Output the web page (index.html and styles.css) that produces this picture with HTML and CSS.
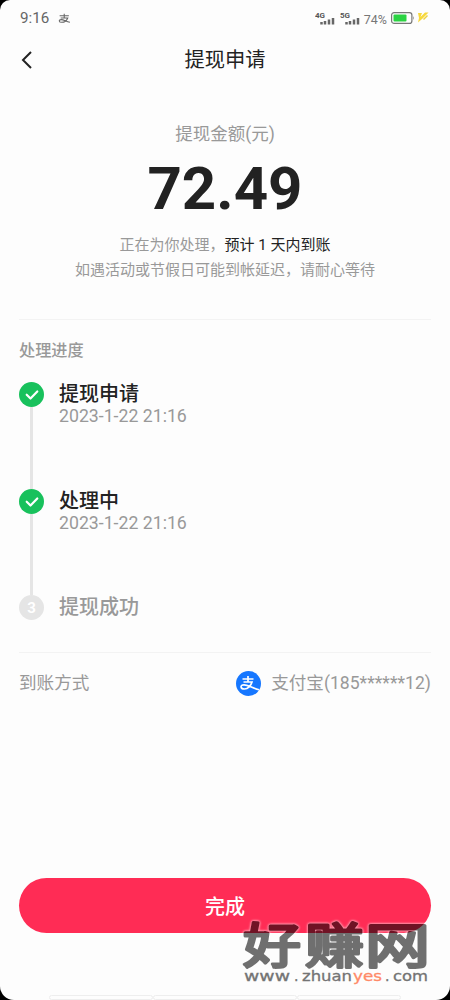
FILE: index.html
```
<!DOCTYPE html>
<html lang="zh-CN">
<head>
<meta charset="utf-8">
<title>提现申请</title>
<link rel="stylesheet" href="styles.css">
</head>
<body>
<div class="device">
<main class="screen">
  <header class="status">
    <span class="clock">9:16</span>
    <svg class="status-pay" viewBox="0 0 24 20"><path d="M3 5h17M11.500 1v8M5 9h13c-2 5-6 8-11 8-6 0-6-5-1-5 5 0 9 4 16 5"/></svg>
    <div class="indicators">
      <svg class="signal" viewBox="0 0 20 15"><text x="0" y="6.500">4G</text><path d="M6.500 11v2.500M10 10v3.500M14 8.500v5M18 7v6.500"/></svg>
      <svg class="signal second" viewBox="0 0 20 15"><text x="0" y="6.500">5G</text><path d="M6.500 11v2.500M10 10v3.500M14 8.500v5M18 7v6.500"/></svg>
      <span class="percent">74%</span>
      <svg class="battery" viewBox="0 0 24 12"><rect x=".6" y=".6" width="20.300" height="10.800" rx="2.500" fill="none" stroke="#777" stroke-width="1.200"/><path d="M22 4v4q1.500-2 0-4" fill="#777"/><rect x="2.500" y="2.500" width="13" height="7" rx="1" fill="#2bd343"/></svg>
      <svg class="bolt" viewBox="0 0 12 12"><path d="M1 2h4L3.500 6 8 1.500h3.500L5 8l-4 3.500L2 7z" fill="#f7d83c"/><path d="M10.500 4.500L6.500 8.500" fill="none" stroke="#efd23c" stroke-width="1.500"/></svg>
    </div>
  </header>
  <nav class="nav">
    <svg class="back" viewBox="0 0 12 20"><path d="M10 2L2 10l8 8"/></svg>
    <h1>提现申请</h1>
  </nav>
  <section class="summary">
    <p class="label">提现金额(元)</p>
    <p class="amount">72.49</p>
    <p class="note">正在为你处理，<span class="strong">预计 1 天内到账</span></p>
    <p class="note">如遇活动或节假日可能到帐延迟，请耐心等待</p>
  </section>
  <section class="progress">
    <h2>处理进度</h2>
    <ol class="steps">
      <li class="step">
        <div class="rail"><span class="dot done"><svg viewBox="0 0 25 25"><path d="M7.700 12.700l3.800 3.800 6.800-7"/></svg></span></div>
        <div class="info"><h3>提现申请</h3><time>2023-1-22 21:16</time></div>
      </li>
      <li class="step">
        <div class="rail"><span class="dot done"><svg viewBox="0 0 25 25"><path d="M7.700 12.700l3.800 3.800 6.800-7"/></svg></span></div>
        <div class="info"><h3>处理中</h3><time>2023-1-22 21:16</time></div>
      </li>
      <li class="step pending">
        <div class="rail"><span class="dot">3</span></div>
        <div class="info"><h3>提现成功</h3></div>
      </li>
    </ol>
  </section>
  <section class="method">
    <span class="method-text">到账方式</span>
    <span class="account">
      <svg class="alipay" viewBox="0 0 25 25"><circle cx="12.500" cy="12.500" r="12.500" fill="#1677ff"/><path d="M6.500 8h11M12 5v6M7.500 11h8.500c-1 3.500-4 7-7.500 7-4.500 0-4.500-4.200-.5-4.200 4 0 7.500 3 15 5" fill="none" stroke="#fff" stroke-width="1.700"/></svg>
      <span class="method-text">支付宝(185******12)</span>
    </span>
  </section>
  <button class="finish" type="button">完成</button>
  <div class="dock"><i></i><i></i><i></i></div>
  <svg class="watermark" viewBox="0 0 210 75">
    <g class="mark-name"><text x="11" y="48.500" textLength="58" lengthAdjust="spacingAndGlyphs">好</text><text x="73" y="48.500" textLength="59" lengthAdjust="spacingAndGlyphs">赚</text><text x="133" y="48.500" textLength="65" lengthAdjust="spacingAndGlyphs">网</text></g>
    <g class="mark-url"><text x="12" y="67" textLength="46" lengthAdjust="spacingAndGlyphs">www</text><text x="62" y="67">.</text><text x="70" y="67" textLength="50" lengthAdjust="spacingAndGlyphs">zhuan</text><text class="accent" x="121" y="67" textLength="29" lengthAdjust="spacingAndGlyphs">yes</text><text x="153" y="67">.</text><text x="161" y="67" textLength="35" lengthAdjust="spacingAndGlyphs">com</text></g>
  </svg>
</main>
</div>
</body>
</html>
```
FILE: styles.css
```
* { box-sizing: border-box; margin: 0; padding: 0; }
body { background: #000; font-family: Roboto, "Noto Sans CJK SC", sans-serif; }
.device { width: 450px; height: 1000px; overflow: hidden; background: #000; }
.screen { position: relative; display: flex; flex-direction: column; height: 1000px; padding: 0 19px; background: #fdfdfd; border-radius: 10px 10px 14px 14px; overflow: hidden; }

.status { display: flex; align-items: center; height: 36px; color: #666; }
.clock { font-size: 15.2px; margin-left: 1px; }
.status-pay { width: 13px; height: 11px; margin-left: 9px; fill: none; stroke: #666; stroke-width: 2; }
.indicators { display: flex; align-items: center; margin-left: auto; }
.signal { width: 20px; height: 15px; fill: none; stroke: #666; stroke-width: 2.5; }
.signal text { font-size: 8px; font-weight: 700; fill: #555; stroke: none; }
.second { margin-left: 5px; }
.percent { font-size: 12.5px; margin: 2px 4px 0 4px; color: #777; }
.battery { width: 24px; height: 12px; }
.bolt { width: 12px; height: 12px; margin: 0 2px 2px 2px; }

.nav { display: grid; grid-template-columns: 30px 1fr 30px; align-items: center; height: 46px; }
.back { width: 12px; height: 20px; margin: 2px 0 0 2px; fill: none; stroke: #222; stroke-width: 2; }
h1 { font-size: 20.3px; line-height: 30px; padding-top: 1px; font-weight: 400; text-align: center; color: #222; }

.summary { height: 236.5px; padding-top: 40px; text-align: center; }
.label { font-size: 17.5px; line-height: 24px; color: #999; }
.amount { font-size: 60px; font-weight: 700; line-height: 60px; height: 60px; margin: 13px 0 13.5px; color: #222; }
.note { font-size: 15px; line-height: 25px; color: #999; white-space: nowrap; }
.strong { color: #222; }

.progress { height: 333px; padding-top: 19.5px; border-top: 1px solid #f3f3f3; }
h2 { font-size: 16.2px; line-height: 24px; font-weight: 500; color: #999; }
.steps { list-style: none; margin-top: 19px; }
.step { display: flex; height: 106.5px; gap: 15px; }
.rail { display: flex; flex-direction: column; align-items: center; width: 25px; }
.step:not(.pending) .rail::after { content: ""; flex: 1; width: 3px; background: #e5e5e5; }
.dot { display: grid; place-items: center; width: 25px; height: 25px; border-radius: 50%; background: #e5e5e5; color: #fff; font-size: 15px; font-weight: 700; }
.dot svg { width: 25px; height: 25px; fill: none; stroke: #fff; stroke-width: 2.2; stroke-linecap: round; stroke-linejoin: round; }
.done { background: #18c15c; }
h3 { font-size: 20px; line-height: 24px; font-weight: 500; color: #222; }
.pending h3 { color: #999; }
time { display: block; font-size: 17.7px; line-height: 21px; color: #999; }

.method { display: flex; align-items: center; justify-content: space-between; height: 62px; border-top: 1px solid #f3f3f3; font-size: 17.6px; color: #999; }
.method-text { padding-bottom: 3px; }
.account { display: flex; align-items: center; gap: 10px; }
.alipay { width: 25px; height: 25px; }

.finish { height: 55px; margin-top: 164px; flex: none; border: 0; border-radius: 28px; background: #ff2c55; color: #fff; font-family: inherit; font-size: 20px; font-weight: 500; }
.dock { display: flex; width: 352px; height: 5px; margin: auto auto 0; }
.dock i { flex: 103 0 0; border: 1px solid #eee; border-radius: 3px; }
.dock i:nth-child(2) { flex-grow: 143; }
.watermark { position: absolute; left: 232px; top: 914px; width: 210px; height: 75px; overflow: visible; }
.mark-name { font: 400 48px/1 "Noto Sans CJK SC", sans-serif; fill: #000; stroke: #000; stroke-width: 3; stroke-linejoin: round; stroke-linecap: round; opacity: .56; }
.mark-name text { filter: drop-shadow(0 0 1px #fff) drop-shadow(0 0 1px #fff); }
.mark-url { font: 400 14px/1 "DejaVu Sans", sans-serif; fill: #747474; stroke: #747474; stroke-width: .3; }
.accent { fill: #ff8a68; stroke: #ff8a68; }
```
